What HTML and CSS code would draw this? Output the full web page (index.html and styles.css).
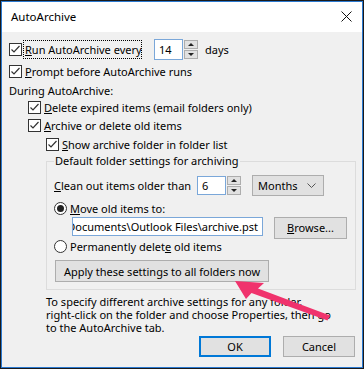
FILE: index.html
```html
<!DOCTYPE html>
<html>
<head>
<meta charset="utf-8">
<link rel="stylesheet" href="styles.css">
</head>
<body>
<div class="window">
  <div class="titlebar">
    <span class="title">AutoArchive</span>
    <svg class="close" width="11" height="11" viewBox="0 0 11 11"><path d="M0.5 0.5L10.5 10.5M10.5 0.5L0.5 10.5" stroke="#111" stroke-width="1" fill="none"/></svg>
  </div>
  <div class="content">
    <div class="row r1">
      <span class="cb"><svg width="13" height="13" viewBox="0 0 13 13"><path d="M2.5 6.5L5 9L10.5 3" stroke="#333" stroke-width="1.2" fill="none"/></svg></span>
      <span class="lbl focus"><u>R</u>un AutoArchive every</span>
      <span class="spin sp1"><span class="field">14</span><span class="arrows"><span class="ab"><i class="up"></i></span><span class="ab"><i class="dn"></i></span></span></span>
      <span class="days">days</span>
    </div>
    <div class="row r2">
      <span class="cb"><svg width="13" height="13" viewBox="0 0 13 13"><path d="M2.5 6.5L5 9L10.5 3" stroke="#333" stroke-width="1.2" fill="none"/></svg></span>
      <span class="lbl"><u>P</u>rompt before AutoArchive runs</span>
    </div>
    <div class="row r3">During AutoArchive:</div>
    <div class="row r4 ind1">
      <span class="cb"><svg width="13" height="13" viewBox="0 0 13 13"><path d="M2.5 6.5L5 9L10.5 3" stroke="#333" stroke-width="1.2" fill="none"/></svg></span>
      <span class="lbl"><u>D</u>elete expired items (email folders only)</span>
    </div>
    <div class="row r5 ind1">
      <span class="cb"><svg width="13" height="13" viewBox="0 0 13 13"><path d="M2.5 6.5L5 9L10.5 3" stroke="#333" stroke-width="1.2" fill="none"/></svg></span>
      <span class="lbl"><u>A</u>rchive or delete old items</span>
    </div>
    <div class="row r6 ind2">
      <span class="cb"><svg width="13" height="13" viewBox="0 0 13 13"><path d="M2.5 6.5L5 9L10.5 3" stroke="#333" stroke-width="1.2" fill="none"/></svg></span>
      <span class="lbl"><u>S</u>how archive folder in folder list</span>
    </div>
    <fieldset class="group">
      <legend>Default folder settings for archiving</legend>
      <div class="row g1">
        <span class="lbl"><u>C</u>lean out items older than</span>
        <span class="spin sp2"><span class="field">6</span><span class="arrows"><span class="ab"><i class="up"></i></span><span class="ab"><i class="dn"></i></span></span></span>
        <span class="combo">Months<svg width="9" height="5" viewBox="0 0 9 5"><path d="M0.5 0.5L4.5 4.5L8.5 0.5" stroke="#555" fill="none"/></svg></span>
      </div>
      <div class="row g2">
        <span class="rb"><span class="dot"></span></span>
        <span class="lbl"><u>M</u>ove old items to:</span>
      </div>
      <div class="row g3">
        <span class="path"><span>C:\Users\user\Documents\Outlook Files\archive.pst</span></span>
        <span class="btn browse"><u>B</u>rowse...</span>
      </div>
      <div class="row g4">
        <span class="rb"></span>
        <span class="lbl">Permanently delet<u>e</u> old items</span>
      </div>
      <div class="btn apply">Apply these settings to all folders now</div>
    </fieldset>
    <p class="note">To specify different archive settings for any folder,<br>right-click on the folder and choose Properties, then go<br>to the AutoArchive tab.</p>
    <div class="buttons">
      <span class="btn ok">OK</span>
      <span class="btn cancel">Cancel</span>
    </div>
  </div>
  <svg class="arrow" width="364" height="369" viewBox="0 0 364 369">
    <polygon points="235,281 264,283 258,288.5 330,315.5 327.5,320.5 251.5,293 246,299" fill="#f0336d"/>
  </svg>
</div>
</body>
</html>
```

FILE: styles.css
```css
* { box-sizing: border-box; }
html, body { margin: 0; padding: 0; }
body {
  width: 364px;
  height: 369px;
  overflow: hidden;
  font-family: "Noto Sans", "Open Sans", sans-serif;
  font-size: 11px;
  color: #000;
  background: #fff;
}
u { text-decoration: underline; text-underline-offset: 1px; }
.window {
  position: relative;
  width: 364px;
  height: 369px;
  border: 1px solid #1a1a1a;
  box-shadow: inset 0 0 0 1px #2b79d0;
  background: #f0f0f0;
  display: flex;
  flex-direction: column;
}
.titlebar {
  height: 30px;
  margin: 1px 1px 0 1px;
  background: #fff;
  display: flex;
  align-items: center;
  justify-content: space-between;
  padding: 0 10px 2px 9px;
}
.title { font-size: 11.5px; }
.content {
  flex: 1;
  margin: 0 1px 1px 1px;
  padding: 6px 7px 0 7px;
  display: flex;
  flex-direction: column;
}
.row { display: flex; align-items: center; white-space: nowrap; }
.r1 { height: 22px; }
.r2 { height: 22px; }
.r3 { height: 16px; padding-left: 0; }
.r4 { height: 18px; }
.r5 { height: 19px; }
.r6 { height: 18px; }
.ind1 { padding-left: 19px; }
.ind2 { padding-left: 37px; }
.cb {
  width: 13px; height: 13px;
  border: 1px solid #333;
  background: #fff;
  flex: none;
  position: relative;
}
.cb svg { position: absolute; left: -1px; top: -1px; }
.lbl { margin-left: 3px; }
.focus {
  outline: 1px dotted #000;
  outline-offset: 0;
  padding: 1px 0 1px 1px;
  margin-left: 2px;
  width: 117px;
  flex: none;
}
.spin { display: flex; align-items: center; height: 21px; }
.field {
  background: #fff;
  border: 1px solid #7aa7d9;
  height: 100%;
  display: flex;
  align-items: center;
  padding-left: 4px;
}
.sp1 { margin-left: 13px; }
.sp1 .field { width: 29px; }
.arrows {
  display: flex;
  flex-direction: column;
  gap: 1px;
  margin-left: 1px;
  height: 19px;
}
.ab {
  width: 14px; height: 9px;
  border: 1px solid #adadad;
  background: #e1e1e1;
  display: flex; align-items: center; justify-content: center;
}
.up { width: 0; height: 0; border-left: 3px solid transparent; border-right: 3px solid transparent; border-bottom: 3px solid #222; }
.dn { width: 0; height: 0; border-left: 3px solid transparent; border-right: 3px solid transparent; border-top: 3px solid #222; }
.days { margin-left: 7px; }
.group {
  margin: 0 -1px 0 37px;
  padding: 0 7px 7px 7px;
  border: 1px solid #dcdcdc;
  min-width: 0;
}
.group legend {
  padding: 0 1px;
  margin-left: 0;
  height: 16px;
  line-height: 16px;
}
.group .lbl:first-child { margin-left: 0; }
.g1 { height: 20px; margin-top: 6px; }
.g1 .lbl { width: 143px; flex: none; }
.sp2 { height: 19px; }
.sp2 .field { width: 29px; }
.sp2 .arrows { height: 19px; }
.combo {
  margin-left: 11px;
  width: 72px; height: 21px;
  background: #e1e1e1;
  border: 1px solid #adadad;
  display: flex; align-items: center; justify-content: space-between;
  padding: 0 7px 0 5px;
}
.g2 { height: 18px; margin-top: 4px; }
.rb {
  width: 13px; height: 13px;
  border: 1px solid #333;
  border-radius: 50%;
  background: #fff;
  flex: none;
  display: flex; align-items: center; justify-content: center;
}
.dot { width: 7px; height: 7px; border-radius: 50%; background: #222; }
.g3 { height: 21px; }
.path {
  margin-left: 18px;
  width: 191px; height: 19px;
  border: 1px solid #7aa7d9;
  background: #fff;
  overflow: hidden;
  display: flex; align-items: center; justify-content: flex-end;
  padding-right: 4px;
  align-self: flex-start;
}
.path span { flex: none; }
.btn {
  background: #e1e1e1;
  border: 1px solid #adadad;
  display: flex; align-items: center; justify-content: center;
  white-space: nowrap;
}
.browse { margin-left: 11px; width: 73px; height: 22px; }
.g4 { height: 17px; }
.apply { margin-top: 5px; margin-left: 1px; width: 214px; height: 22px; }
.note {
  margin: 5px 0 0 37px;
  line-height: 13px;
  white-space: nowrap;
}
.buttons {
  display: flex;
  justify-content: flex-end;
  gap: 12px;
  margin-top: 2px;
}
.ok, .cancel { width: 72px; height: 21px; }
.ok { border: 2px solid #0078d7; }
.arrow { position: absolute; left: -1px; top: -1px; pointer-events: none; }
```
